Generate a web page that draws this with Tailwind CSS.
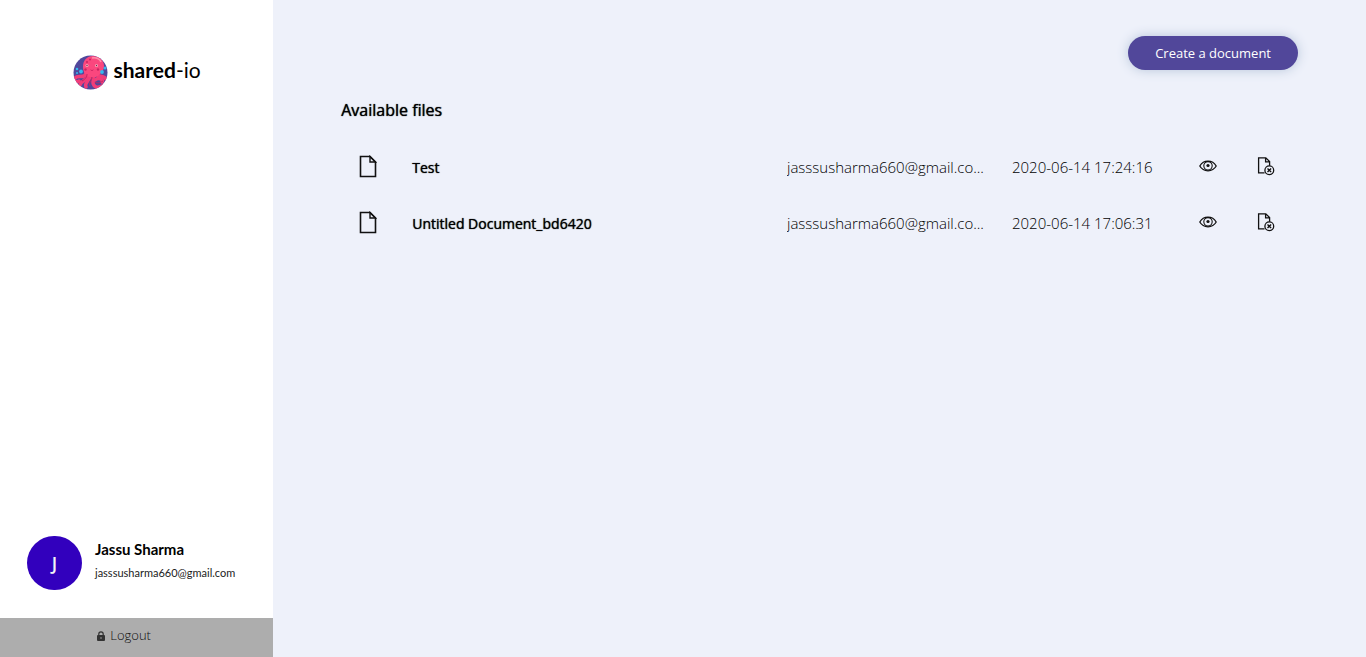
<!DOCTYPE html>
<html lang="en">
<head>
<meta charset="utf-8">
<meta name="viewport" content="width=device-width, initial-scale=1">
<title>shared-io</title>
<script src="https://cdn.jsdelivr.net/npm/@tailwindcss/browser@4"></script>
</head>
<body class="flex min-h-screen bg-[#eef1fa] font-['Open_Sans',sans-serif] text-black">
<svg class="hidden" aria-hidden="true">
  <symbol id="file" viewBox="0 0 18 22"><path d="M1.500 1h9.500L16.500 6.500V21h-15z" fill="none" stroke="#111" stroke-width="1.600"/><path d="M11 1v5.500H16.500L11 1z" fill="none" stroke="#111" stroke-width="1.400"/></symbol>
  <symbol id="eye" viewBox="0 0 18 12"><path d="M.8 6C4.500-.4 13.500-.4 17.200 6 13.500 12.400 4.500 12.400.8 6z" fill="none" stroke="#111" stroke-width="1.300"/><circle cx="9" cy="5.800" r="4.200" fill="none" stroke="#111" stroke-width="1.100"/><circle cx="9" cy="5.500" r="1.600" fill="#111"/></symbol>
  <symbol id="remove" viewBox="0 0 18 20"><path d="M7.500 16.800H1.600V1.800H8.800L12.600 5.600V9.800M8.600 1.800v4h4" fill="none" stroke="#111" stroke-width="1.300"/><circle cx="12.300" cy="14.300" r="4.400" fill="none" stroke="#111" stroke-width="1.300"/><path d="M10.500 12.500l3.600 3.600m0-3.600l-3.600 3.600" stroke="#111" stroke-width="1.400"/></symbol>
</svg>
<aside class="flex w-1/5 shrink-0 flex-col bg-white">
  <a href="#" class="mt-[54px] flex items-center justify-center gap-1.5 font-['Lato',sans-serif] text-[21px] leading-8">
    <svg class="size-[35px] shrink-0" viewBox="0 0 35 35" aria-hidden="true">
      <defs><clipPath id="disc"><circle cx="17.500" cy="17.500" r="17"/></clipPath></defs>
      <g clip-path="url(#disc)">
        <path d="M0 0h35v35H0z" fill="#51479b"/>
        <g fill="none" stroke="#f23d78" stroke-linecap="round" stroke-width="3.500">
          <path d="M13 17c0 7-8 3-11 6-2 3 2 5 4 3"/><path d="M15 19c-1 8-7 6-8 11"/><path d="M17 20c0 6-6 7-4 12"/><path d="M20 19c1 7-2 10 3 13 4 1 6-2 8-1"/><path d="M23 17c1 7 7 2 10 7"/><path d="M22 25c3-3 9-1 7 2"/>
        </g>
        <path d="M10 12C10 5 14 1 20 1s11 4 11 10c0 5-3 7-6 10-3 2-9 2-12-1-2-2-3-5-3-8z" fill="#fa477e"/>
        <path d="M9 26c4-2 5-5 5-7m8 8c3 2 6 0 8-1M17 31c-2-3 2-5 2-9" fill="none" stroke="#b92763" stroke-width="1"/>
        <path d="M19 3c4-1 8 1 9 4" fill="none" stroke="#ff91a9" stroke-width="1.500"/>
        <g fill="#ca2462"><circle cx="14" cy="7" r="1"/><circle cx="17" cy="4.500" r="1"/><circle cx="12.500" cy="14.500" r="1.200"/><circle cx="25" cy="14.500" r="1.200"/><path d="M17 14q2 2 4 0-2 4-4 0z"/></g>
        <g fill="#ffa6ba"><circle cx="14" cy="10.500" r="1.500"/><circle cx="23.500" cy="10.500" r="1.500"/></g>
        <g fill="#60314f"><circle cx="14" cy="10.500" r=".7"/><circle cx="23.500" cy="10.500" r=".7"/></g>
        <g fill="#35b9ef"><circle cx="4" cy="14" r="1.300"/><circle cx="8" cy="16.500" r="1.900"/><circle cx="32" cy="13" r="1.500"/><circle cx="29" cy="17" r="1.900"/><circle cx="4" cy="18" r="1"/></g>
      </g>
    </svg>
    <span class="pb-1"><b>shared</b>-io</span>
  </a>
  <div class="mt-auto mb-7 flex items-center gap-[13px] pl-[27px] font-['Lato',sans-serif]">
    <div class="flex h-[54px] w-[55px] shrink-0 items-center justify-center rounded-full bg-[#3200bd] font-['Open_Sans',sans-serif] text-lg font-semibold text-gray-100">J</div>
    <div class="min-w-0 pb-1">
      <p class="text-[15px] leading-5 font-bold">Jassu Sharma</p>
      <p class="mt-1 text-[11px] leading-5 text-[#222]">jasssusharma660@gmail.com</p>
    </div>
  </div>
  <button type="button" class="flex h-[39px] items-center justify-center gap-1 bg-[#adadad] pr-[26px] pb-1 text-[13px] font-light text-[#111]">
    <svg class="size-[10px]" viewBox="0 0 10 10" aria-hidden="true"><path d="M2.800 4.500V3a2.200 2.200 0 0 1 4.400 0v1.500" fill="none" stroke="#333" stroke-width="1.200"/><rect x="1" y="4" width="8" height="6" rx="1" fill="#333"/><path d="M5 6v2" stroke="#999"/></svg>
    Logout
  </button>
</aside>
<main class="flex min-w-0 flex-1 flex-col px-[68px] pt-9">
  <button type="button" class="h-[34px] self-end rounded-full bg-[#51479a] px-[27px] pt-0.5 text-[13px] text-white shadow-[0_0_12px_#b7c5da]">Create a document</button>
  <h1 class="mt-7 text-base leading-6 font-medium [text-shadow:0_0_1px_#000]">Available files</h1>
  <table class="mt-4 w-full table-fixed text-left text-sm">
    <colgroup><col class="w-[71px]"><col><col class="w-[225px]"><col class="w-[167px]"><col class="w-[58px]"><col class="w-[61px]"></colgroup>
    <tbody>
      <tr class="h-14">
        <td class="pl-[18px]"><svg class="h-[23px] w-[18px]"><use href="#file"/></svg></td>
        <td class="pt-1 font-medium [text-shadow:0_0_1px_#000]">Test</td>
        <td class="truncate pt-1 pr-6 text-[15px] font-light">jasssusharma660@gmail.co...</td>
        <td class="pt-1 text-[15px] font-light">2020-06-14 17:24:16</td>
        <td><button type="button" aria-label="View Test" class="mx-auto block"><svg class="h-3 w-[18px]"><use href="#eye"/></svg></button></td>
        <td class="pr-1"><button type="button" aria-label="Delete Test" class="mx-auto block"><svg class="h-5 w-[18px]"><use href="#remove"/></svg></button></td>
      </tr>
      <tr class="h-14">
        <td class="pl-[18px]"><svg class="h-[23px] w-[18px]"><use href="#file"/></svg></td>
        <td class="pt-1 font-medium [text-shadow:0_0_1px_#000]">Untitled Document_bd6420</td>
        <td class="truncate pt-1 pr-6 text-[15px] font-light">jasssusharma660@gmail.co...</td>
        <td class="pt-1 text-[15px] font-light">2020-06-14 17:06:31</td>
        <td><button type="button" aria-label="View Untitled Document_bd6420" class="mx-auto block"><svg class="h-3 w-[18px]"><use href="#eye"/></svg></button></td>
        <td class="pr-1"><button type="button" aria-label="Delete Untitled Document_bd6420" class="mx-auto block"><svg class="h-5 w-[18px]"><use href="#remove"/></svg></button></td>
      </tr>
    </tbody>
  </table>
</main>
</body>
</html>
